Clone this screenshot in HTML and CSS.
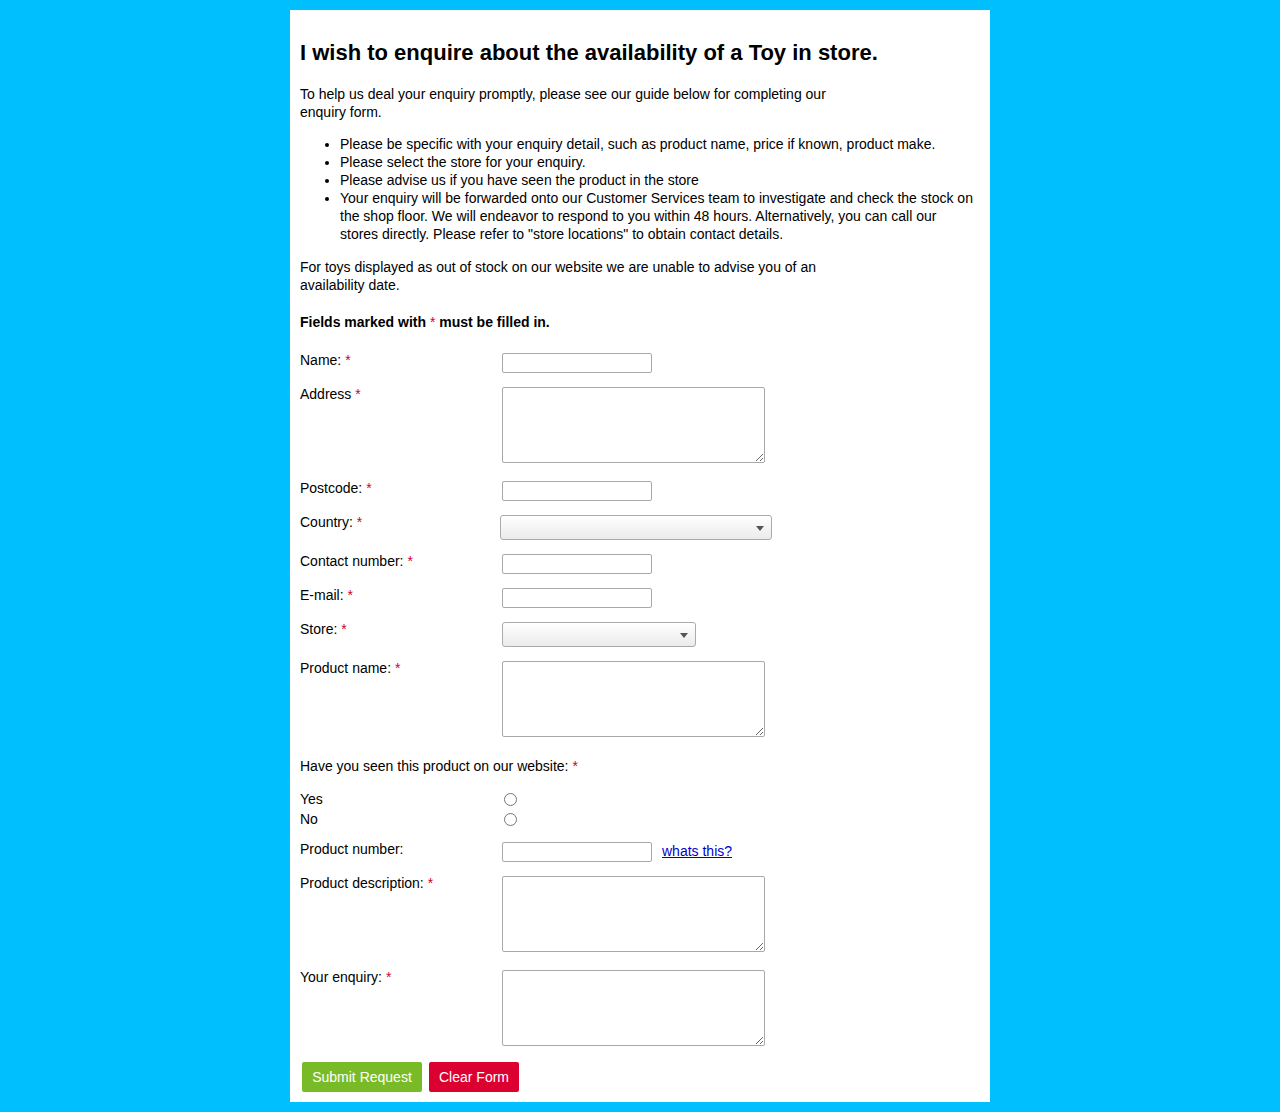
FILE: index.html
```html
<!DOCTYPE html>
<html lang="en">
<head>
  <meta charset="UTF-8" />
  <meta name="viewport" content="width=device-width, initial-scale=1.0"/>
  <title>Toy Availability Enquiry</title>
  <link rel="stylesheet" href="styles.css">
</head>
<body>
  <div class="page">
    <h1>I wish to enquire about the availability of a Toy in store.</h1>
    <p class="narrow">To help us deal your enquiry promptly, please see our guide below for completing our enquiry form.</p>
    <ul>
      <li>Please be specific with your enquiry detail, such as product name, price if known, product make.</li>
      <li>Please select the store for your enquiry.</li>
      <li>Please advise us if you have seen the product in the store</li>
      <li>Your enquiry will be forwarded onto our Customer Services team to investigate and check the stock on the shop floor. We will endeavor to respond to you within 48 hours. Alternatively, you can call our stores directly. Please refer to "store locations" to obtain contact details.</li>
    </ul>
    <p class="narrow after-list">For toys displayed as out of stock on our website we are unable to advise you of an availability date.</p>
    <p class="note">Fields marked with <span class="req">*</span> must be filled in.</p>

    <form>
      <div class="row">
        <label>Name: <span class="req">*</span></label>
        <input type="text" />
      </div>
      <div class="row">
        <label>Address <span class="req">*</span></label>
        <textarea></textarea>
      </div>
      <div class="row">
        <label>Postcode: <span class="req">*</span></label>
        <input type="text" />
      </div>
      <div class="row">
        <label>Country: <span class="req">*</span></label>
        <div class="select wide"></div>
      </div>
      <div class="row">
        <label>Contact number: <span class="req">*</span></label>
        <input type="text" />
      </div>
      <div class="row">
        <label>E-mail: <span class="req">*</span></label>
        <input type="text" />
      </div>
      <div class="row">
        <label>Store: <span class="req">*</span></label>
        <div class="select"></div>
      </div>
      <div class="row">
        <label>Product name: <span class="req">*</span></label>
        <textarea></textarea>
      </div>

      <div class="question">Have you seen this product on our website: <span class="req">*</span></div>
      <div class="radio-row">
        <label>Yes</label>
        <input type="radio" name="seen" />
      </div>
      <div class="radio-row">
        <label>No</label>
        <input type="radio" name="seen" />
      </div>

      <div class="row product-number">
        <label>Product number:</label>
        <input type="text" />
        <a href="#">whats this?</a>
      </div>
      <div class="row">
        <label>Product description: <span class="req">*</span></label>
        <textarea></textarea>
      </div>
      <div class="row">
        <label>Your enquiry: <span class="req">*</span></label>
        <textarea></textarea>
      </div>

      <div class="buttons">
        <button type="button" class="submit">Submit Request</button>
        <button type="reset" class="clear">Clear Form</button>
      </div>
    </form>
  </div>
</body>
</html>
```

FILE: styles.css
```css
* {
  box-sizing: border-box;
}
body {
  margin: 0;
  padding: 10px 0;
  background: #00bfff;
  font-family: "Liberation Sans", Arial, sans-serif;
  font-size: 14px;
  line-height: 18px;
  color: #000;
}
.page {
  width: 700px;
  margin: 0 auto;
  background: #fff;
  padding: 10px;
}
h1 {
  font-size: 22px;
  line-height: 25px;
  margin: 20px 0 20px;
}
p {
  margin: 14px 0;
}
.narrow {
  max-width: 540px;
}
ul {
  margin: 14px 5px 14px 0;
  padding-left: 40px;
}
.after-list {
  margin-top: 15px;
}
.note {
  font-weight: bold;
  margin: 19px 0 20px;
}
.req {
  color: #cc0033;
  font-weight: normal;
}
.row {
  display: flex;
  align-items: flex-start;
  margin-bottom: 12px;
}
.row label,
.radio-row label {
  width: 202px;
  flex-shrink: 0;
}
input[type="text"] {
  width: 150px;
  height: 20px;
  margin: 2px 0 0;
  border: 1px solid #a9a9a9;
  border-radius: 2px;
  font: inherit;
}
textarea {
  width: 263px;
  height: 76px;
  margin: 2px 0 4px;
  border: 1px solid #a9a9a9;
  border-radius: 2px;
  font: inherit;
}
.select {
  position: relative;
  width: 194px;
  height: 25px;
  margin-top: 2px;
  border: 1px solid #aaa;
  border-radius: 3px;
  background: linear-gradient(#fff, #ebebeb);
}
.select::after {
  content: "";
  position: absolute;
  right: 7px;
  top: 10px;
  border-left: 4px solid transparent;
  border-right: 4px solid transparent;
  border-top: 5px solid #555;
}
.select.wide {
  width: 272px;
  margin-left: -2px;
}
.question {
  margin: 16px 0 15px;
}
.radio-row {
  display: flex;
  height: 20px;
}
.radio-row input {
  width: 13px;
  height: 13px;
  margin: 3px 0 0 2px;
}
.product-number {
  margin-top: 10px;
}
.product-number a {
  margin: 2px 0 0 10px;
  color: #0000cc;
}
.buttons {
  display: flex;
  gap: 7px;
  padding-left: 2px;
  margin-top: 12px;
}
.buttons button {
  height: 30px;
  border: none;
  border-radius: 2px;
  color: #fff;
  font: inherit;
  padding: 0 10px;
}
.submit {
  width: 120px;
  background: #79bb26;
}
.clear {
  width: 90px;
  background: #db0030;
}
```
